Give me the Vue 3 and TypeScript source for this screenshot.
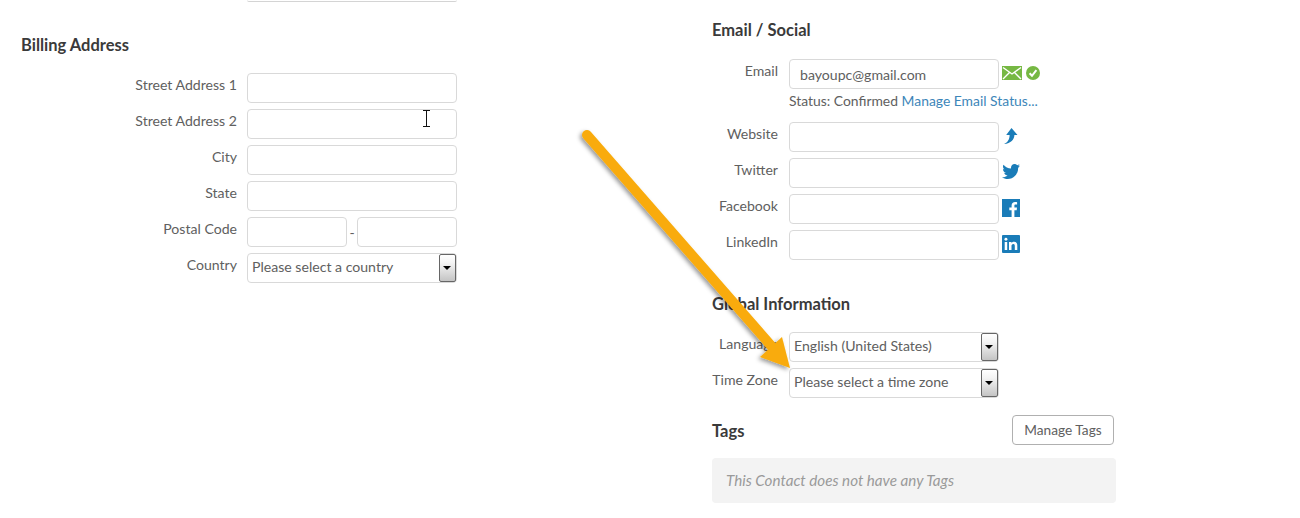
<script setup lang="ts">
const billing = ['Street Address 1', 'Street Address 2', 'City', 'State']
const social = ['Website', 'Twitter', 'Facebook', 'LinkedIn']
</script>

<template>
  <div class="page">
    <section class="left">
      <div class="stub"></div>
      <h3 class="billing-title">Billing Address</h3>
      <div v-for="name in billing" :key="name" class="row">
        <label>{{ name }}</label>
        <input class="field" type="text" />
      </div>
      <div class="row">
        <label>Postal Code</label>
        <div class="postal">
          <input class="field short" type="text" />
          <span class="dash">-</span>
          <input class="field short" type="text" />
        </div>
      </div>
      <div class="row">
        <label>Country</label>
        <div class="select">
          <span>Please select a country</span>
          <i class="select-btn"></i>
        </div>
      </div>
    </section>

    <section class="right">
      <h3 class="email-title">Email / Social</h3>
      <div class="row">
        <label>Email</label>
        <input class="field email" type="text" value="bayoupc@gmail.com" />
        <div class="icons">
          <svg width="20" height="14" viewBox="0 0 20 14">
            <rect width="20" height="14" fill="#76b843" />
            <path d="M1 1.5 10 8 19 1.5M1 13 7.5 6.5M19 13 12.5 6.5" fill="none" stroke="#fff" stroke-width="1.4" />
          </svg>
          <svg class="check" width="14" height="14" viewBox="0 0 14 14">
            <circle cx="7" cy="7" r="7" fill="#76b843" />
            <path d="M3.6 7.2 6 9.8 10.4 4.2" fill="none" stroke="#fff" stroke-width="2" />
          </svg>
        </div>
      </div>
      <div class="status">Status: Confirmed <a>Manage Email Status...</a></div>
      <div v-for="name in social" :key="name" class="row">
        <label>{{ name }}</label>
        <input class="field" type="text" />
        <div class="icons">
          <svg v-if="name === 'Website'" width="18" height="18" viewBox="0 0 18 18">
            <path d="M9.5 1 15.5 8H12.4C12.2 12.5 9 16.4 2 17 6 15.2 7.6 12 7.6 8H4.2Z" fill="#1a7cb8" />
          </svg>
          <svg v-else-if="name === 'Twitter'" width="18" height="16" viewBox="0 0 18 16">
            <path d="M18 1.6C17.3 2 16.7 2.200 16 2.300 16.700 1.800 17.300 1.100 17.500 .3 16.800 .7 16.100 1 15.200 1.200 14.500.5 13.600 0 12.600 0 10.600 0 9 1.700 9 3.700 9 4 9 4.300 9.100 4.500 6 4.400 3.300 2.900 1.500.7 1.200 1.200 1 1.900 1 2.500 1 3.800 1.700 4.900 2.600 5.600 2 5.600 1.500 5.400 1 5.100V5.200C1 7 2.200 8.500 3.900 8.800 3.300 9 2.700 9 2.200 8.900 2.700 10.400 4 11.400 5.600 11.500 3.700 12.900 1.800 13.400 0 13.200 1.600 14.300 3.600 15 5.700 15 12.400 15 16.100 9.300 16.100 4.400V3.900C16.800 3.400 17.500 2.600 18 1.600Z" fill="#1a7cb8" />
          </svg>
          <svg v-else-if="name === 'Facebook'" width="18" height="18" viewBox="0 0 18 18">
            <rect width="18" height="18" fill="#1a7cb8" />
            <path d="M12.400 18V11.200H14.700L15 8.500H12.400V6.900C12.400 6.100 12.600 5.600 13.700 5.600H15.100V3.200C14.800 3.200 14 3.100 13.100 3.100 11 3.100 9.600 4.400 9.600 6.600V8.500H7.300V11.200H9.600V18Z" fill="#fff" />
          </svg>
          <svg v-else width="18" height="18" viewBox="0 0 18 18">
            <rect width="18" height="18" rx="1" fill="#1a7cb8" />
            <path d="M2.700 7H5.200V15H2.700ZM7 7H9.400V8.100C9.800 7.400 10.700 6.800 12 6.800 14.600 6.800 15.300 8.500 15.300 10.700V15H12.800V11.200C12.800 10.200 12.700 9 11.400 9 10 9 9.500 10 9.500 11.200V15H7Z" fill="#fff" />
            <circle cx="3.950" cy="4.300" r="1.450" fill="#fff" />
          </svg>
        </div>
      </div>

      <h3 class="global-title">Global Information</h3>
      <div class="row">
        <label>Language</label>
        <div class="select">
          <span>English (United States)</span>
          <i class="select-btn"></i>
        </div>
      </div>
      <div class="row">
        <label>Time Zone</label>
        <div class="select">
          <span>Please select a time zone</span>
          <i class="select-btn"></i>
        </div>
      </div>

      <div class="tags-head">
        <h3>Tags</h3>
        <button type="button">Manage Tags</button>
      </div>
      <div class="tags-box">This Contact does not have any Tags</div>
    </section>

    <!-- annotation arrow drawn over the form -->
    <svg class="arrow" width="1300" height="518" viewBox="0 0 1300 518">
      <defs>
        <filter id="arrow-shadow" x="-20%" y="-20%" width="140%" height="140%">
          <feDropShadow dx="-2" dy="2" stdDeviation="2" flood-color="#000" flood-opacity="0.4" />
        </filter>
      </defs>
      <g filter="url(#arrow-shadow)">
        <path d="M587 135 774 349" fill="none" stroke="#f9ab0a" stroke-width="10" stroke-linecap="round" />
        <path d="M790 368 782 337 760 357Z" fill="#f9ab0a" />
      </g>
    </svg>

    <!-- mouse pointer -->
    <svg class="ibeam" width="9" height="17" viewBox="0 0 9 17">
      <path d="M1 .5H8M1 16.500H8M4.500 .5V16.500" fill="none" stroke="#111" stroke-width="1" />
    </svg>
  </div>
</template>

<style scoped>
.page {
  position: relative;
  width: 1300px;
  height: 518px;
  overflow: hidden;
  display: flex;
  background: #fff;
  font-family: Lato, "Liberation Sans", sans-serif;
  font-size: 14.1px;
  color: #606060;
}
.left {
  width: 712px;
  box-sizing: border-box;
  padding-left: 21px;
  --label-w: 216px;
  --label-gap: 10px;
}
.right {
  width: 420px;
  --label-w: 66px;
  --label-gap: 11px;
}
.stub {
  width: 210px;
  height: 1px;
  margin-left: 226px;
  border-bottom: 1px solid #d4d4d4;
  border-radius: 0 0 4px 4px;
}
h3 {
  margin: 0;
  font-size: 16.5px;
  line-height: 20px;
  font-weight: 700;
  color: #3a3a3a;
}
.billing-title {
  margin-top: 33px;
  margin-bottom: 18px;
}
.email-title {
  margin-top: 20px;
  margin-bottom: 19px;
}
.global-title {
  margin-top: 34px;
  margin-bottom: 18px;
}
.row {
  display: grid;
  grid-template-columns: var(--label-w) auto auto;
  column-gap: var(--label-gap);
  justify-content: start;
  margin-bottom: 6px;
}
label {
  text-align: right;
  line-height: 24px;
  white-space: nowrap;
}
.field {
  width: 210px;
  height: 30px;
  box-sizing: border-box;
  padding: 0 10px;
  border: 1px solid #d9d9d9;
  border-radius: 4px;
  outline: none;
  background: #fff;
  font: inherit;
  color: #606060;
}
.postal {
  display: flex;
  align-items: center;
}
.short {
  width: 100px;
}
.dash {
  width: 10px;
  text-align: center;
}
.select {
  position: relative;
  width: 210px;
  height: 30px;
  box-sizing: border-box;
  padding-left: 4px;
  border: 1px solid #d9d9d9;
  border-radius: 4px;
  line-height: 26px;
}
.select-btn {
  position: absolute;
  top: 0;
  right: 0;
  width: 17px;
  height: 28px;
  box-sizing: border-box;
  border: 1px solid #666;
  border-radius: 2px;
  background: linear-gradient(#fff, #f4f4f4 30%, #c4c4c4);
}
.select-btn::after {
  content: "";
  position: absolute;
  left: 3px;
  top: 11px;
  border: 4.500px solid transparent;
  border-top: 4.500px solid #000;
  border-bottom: 0;
}
.icons {
  display: flex;
  align-items: center;
  margin-left: -8px;
  gap: 4px;
  height: 28px;
}
.check {
  flex: none;
}
.status {
  margin: -3px 0 12px 77px;
  font-size: 13.900px;
  line-height: 18px;
}
.status a {
  color: #3d86b9;
}
.tags-head {
  display: flex;
  justify-content: space-between;
  align-items: center;
  width: 402px;
  margin-top: 17px;
}
.tags-head h3 {
  margin-top: 1px;
}
.tags-head button {
  width: 102px;
  height: 30px;
  padding: 0 0 2px;
  border: 1px solid #b0b0b0;
  border-radius: 4px;
  background: #fff;
  font: inherit;
  font-size: 13.700px;
  color: #606060;
}
.tags-box {
  width: 404px;
  height: 45px;
  margin-top: 13px;
  box-sizing: border-box;
  padding-left: 14px;
  border-radius: 4px;
  background: #f3f3f3;
  font-size: 15.200px;
  font-style: italic;
  line-height: 44px;
  color: #9a9a9a;
}
.arrow {
  position: absolute;
  left: 0;
  top: 0;
  pointer-events: none;
}
.ibeam {
  position: absolute;
  left: 422px;
  top: 110px;
}
</style>

<style>
body {
  margin: 0;
  overflow: hidden;
}
</style>
